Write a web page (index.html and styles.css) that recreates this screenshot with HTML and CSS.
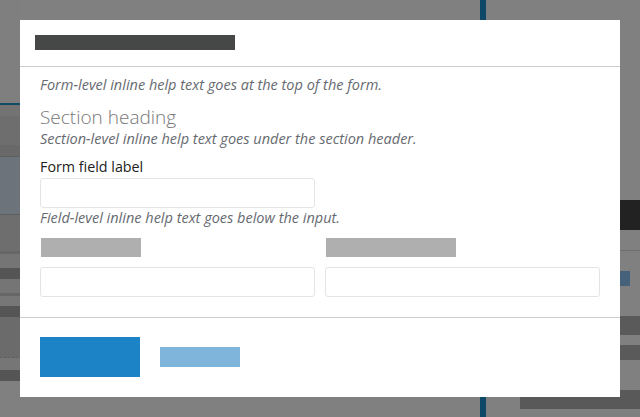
FILE: index.html
```html
<!DOCTYPE html>
<html lang="en">
<head>
<meta charset="utf-8">
<title>Form modal</title>
<link rel="stylesheet" href="styles.css">
</head>
<body>
<div class="bg">
  <div class="bg-left">
    <div class="l1"></div>
    <div class="l2"></div>
    <div class="l3"></div>
    <div class="l4"></div>
    <div class="l5"></div>
    <div class="l6"></div>
    <div class="l7"></div>
    <div class="l8"></div>
    <div class="l9"></div>
    <div class="l10"></div>
    <div class="l11"></div>
    <div class="l12"></div>
    <div class="l13"></div>
    <div class="l14"></div>
    <div class="l15"></div>
    <div class="l16"></div>
    <div class="l17"></div>
    <div class="l18"></div>
    <div class="l19"></div>
    <div class="l20"></div>
  </div>
  <div class="bg-mid"></div>
  <div class="bg-line"></div>
  <div class="bg-right">
    <div class="bg-right-top">
      <div class="bg-right-space"></div>
      <div class="bg-right-strip">
        <div class="r1"></div>
        <div class="r2"></div>
        <div class="r3"></div>
        <div class="r4"></div>
        <div class="r5"></div>
        <div class="r6"><span class="r6-chip"></span></div>
        <div class="r7"></div>
        <div class="r8"></div>
        <div class="r9"></div>
        <div class="r10"></div>
        <div class="r11"></div>
      </div>
    </div>
    <div class="bg-right-bottom"></div>
  </div>
</div>

<div class="modal">
  <div class="modal-header">
    <div class="title-bar"></div>
  </div>
  <div class="modal-body">
    <p class="help help-form">Form-level inline help text goes at the top of the form.</p>
    <h2 class="section-heading">Section heading</h2>
    <p class="help">Section-level inline help text goes under the section header.</p>
    <label class="field-label">Form field label</label>
    <div class="grid">
      <div class="input"></div>
    </div>
    <p class="help">Field-level inline help text goes below the input.</p>
    <div class="grid grid-pair">
      <div class="col">
        <div class="ph-label ph-a"></div>
        <div class="input"></div>
      </div>
      <div class="col">
        <div class="ph-label ph-b"></div>
        <div class="input"></div>
      </div>
    </div>
  </div>
  <div class="modal-footer">
    <div class="btn-primary"></div>
    <div class="btn-secondary"></div>
  </div>
</div>
</body>
</html>
```

FILE: styles.css
```css
html, body {
  margin: 0;
  padding: 0;
}
body {
  width: 640px;
  height: 417px;
  overflow: hidden;
  background: #808080;
  font-family: "Open Sans", "Noto Sans", sans-serif;
  position: relative;
}

/* background page behind the overlay */
.bg {
  display: flex;
  height: 417px;
}
.bg-left {
  width: 20px;
  display: flex;
  flex-direction: column;
}
.l1 { height: 103px; background: #7f7f7f; }
.l2 { height: 2px; background: #124a68; }
.l3 { height: 11px; background: #737373; }
.l4 { height: 29px; background: #6e6e6e; }
.l5 { height: 11px; background: #696969; }
.l6 { height: 1px; background: #5e5e5e; }
.l7 { height: 57px; background: #6c737a; }
.l8 { height: 1px; background: #5e5f60; }
.l9 { height: 36px; background: #6e6e6e; }
.l10 { height: 3px; background: #666666; }
.l11 { height: 14px; background: #757575; }
.l12 { height: 11px; background: #555555; }
.l13 { height: 14px; background: #757575; }
.l14 { height: 3px; background: #666666; }
.l15 { height: 10px; background: #777777; }
.l16 { height: 11px; background: #555555; }
.l17 { height: 40px; background: #6b6b6b; }
.l18 { height: 1px; background: repeating-linear-gradient(90deg, #5e5e5e 0 2px, #6b6b6b 2px 4px); }
.l19 { height: 12px; background: #767676; }
.l20 { height: 11px; background: #555555; }

.bg-mid { width: 460px; }
.bg-line { width: 6px; background: #0f4769; }
.bg-right {
  flex: 1;
  display: flex;
  flex-direction: column;
}
.bg-right-top {
  display: flex;
  height: 390px;
}
.bg-right-space { flex: 1; }
.bg-right-strip {
  width: 20px;
  display: flex;
  flex-direction: column;
}
.r1 { height: 200px; }
.r2 { height: 30px; background: #222222; }
.r3 { height: 20px; }
.r4 { height: 1px; background: #6e6e6e; }
.r5 { height: 20px; }
.r6 { height: 15px; }
.r6-chip { display: block; width: 10px; height: 15px; background: #46627a; }
.r7 { height: 30px; }
.r8 { height: 19px; background: #5a5a5a; }
.r9 { height: 10px; }
.r10 { height: 15px; background: #5a5a5a; }
.r11 { height: 30px; }
.bg-right-bottom {
  margin-left: 34px;
  height: 19px;
  background: #595959;
}

/* modal */
.modal {
  position: absolute;
  left: 20px;
  top: 20px;
  width: 600px;
  height: 377px;
  background: #ffffff;
  display: flex;
  flex-direction: column;
}
.modal-header {
  padding: 15px 15px 16px;
  border-bottom: 1px solid #cccccc;
}
.title-bar {
  width: 200px;
  height: 15px;
  background: #464848;
}
.modal-body {
  padding: 8px 20px 20px;
  flex: 1;
}
.help {
  margin: 0;
  font-size: 14.5px;
  line-height: 20px;
  font-style: italic;
  color: #666a70;
}
.section-heading {
  margin: 10px 0 0;
  font-size: 19px;
  line-height: 24px;
  font-weight: 300;
  color: #777777;
}
.field-label {
  display: block;
  margin-top: 8px;
  font-size: 14.3px;
  line-height: 20px;
  color: #222222;
}
.grid {
  display: grid;
  grid-template-columns: 275px 275px;
  column-gap: 10px;
}
.input {
  box-sizing: border-box;
  height: 30px;
  border: 1px solid #e3e4e6;
  border-radius: 3px;
  margin-top: 1px;
}
.grid-pair { margin-top: 10px; }
.col .input { margin-top: 10px; }
.ph-label {
  height: 19px;
  margin-left: 1px;
  background: #afafaf;
}
.ph-a { width: 100px; }
.ph-b { width: 130px; }
.modal-footer {
  border-top: 1px solid #cccccc;
  padding: 19px 20px 20px;
  display: flex;
  align-items: center;
  gap: 20px;
}
.btn-primary {
  width: 100px;
  height: 40px;
  background: #1b83c6;
}
.btn-secondary {
  width: 80px;
  height: 20px;
  background: #80b5db;
}
```
